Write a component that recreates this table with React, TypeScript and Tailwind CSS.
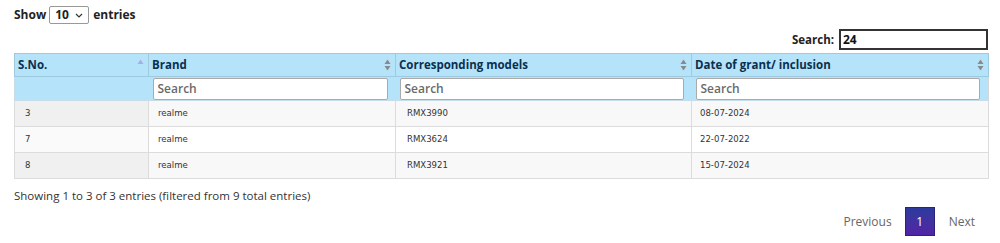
import React from "react";

const SortBoth = () => (
  <svg width="7" height="12" viewBox="0 0 7 12" className="shrink-0">
    <path d="M3.5 0.5 L6.5 5 L0.5 5 Z" fill="#8a8a8a" />
    <path d="M3.5 11.5 L6.5 7 L0.5 7 Z" fill="#8a8a8a" />
  </svg>
);

const SortAsc = () => (
  <svg width="7" height="12" viewBox="0 0 7 12" className="shrink-0">
    <path d="M3.5 0.5 L6.5 5 L0.5 5 Z" fill="#a7aee6" />
  </svg>
);

const rows = [
  { s: "3", b: "realme", m: "RMX3990", d: "08-07-2024" },
  { s: "7", b: "realme", m: "RMX3624", d: "22-07-2022" },
  { s: "8", b: "realme", m: "RMX3921", d: "15-07-2024" },
];

export default function App() {
  const sans = { fontFamily: '"Open Sans", "Noto Sans", sans-serif' };
  return (
    <div className="w-[1000px] h-[243px] bg-white text-[#222] overflow-hidden" style={sans}>
      <div className="pl-[14px] pr-[12px]">
        <div className="flex items-center h-[29px] pt-[1px] text-[12px] font-bold text-[#222]">
          <span>Show</span>
          <div className="ml-[3px] mr-[4px] w-[40px] h-[18px] border border-[#999] rounded-[2px] flex items-center justify-between pl-[5px] pr-[5px] font-bold">
            <span>10</span>
            <svg width="8" height="5" viewBox="0 0 8 5"><path d="M1 1 L4 4 L7 1" stroke="#333" strokeWidth="1.2" fill="none" /></svg>
          </div>
          <span>entries</span>
        </div>
        <div className="flex justify-end items-center h-[21px] text-[11.5px] font-bold">
          <span className="mr-[5px]">Search:</span>
          <div className="w-[149px] h-[21px] border-2 border-[#333] flex items-center pl-[2px] text-[12px] font-bold text-[#111]">24</div>
        </div>
        <table className="table-fixed border-collapse w-[974px] mt-[3px] border border-[#d6d6d6]">
          <colgroup>
            <col className="w-[134px]" />
            <col className="w-[247px]" />
            <col className="w-[296px]" />
            <col className="w-[297px]" />
          </colgroup>
          <thead>
            <tr className="bg-[#b5e4fa] h-[23px] text-[11.5px] font-bold text-[#0c2f4d]">
              {[
                ["S.No.", true],
                ["Brand", false],
                ["Corresponding models", false],
                ["Date of grant/ inclusion", false],
              ].map(([t, asc], i) => (
                <th key={i} className="border border-[#9fc9de] px-[3px] py-0 text-left font-bold">
                  <div className="flex items-center justify-between pr-[1px]">
                    <span>{t as string}</span>
                    {asc ? <SortAsc /> : <SortBoth />}
                  </div>
                </th>
              ))}
            </tr>
            <tr className="bg-[#b5e4fa] h-[24px]">
              <th className="border-l border-b border-[#c6dde9]"></th>
              {[0, 1, 2].map((i) => (
                <th key={i} className="border-b border-[#c6dde9] pl-[4px] pr-[8px] py-0">
                  <div className="h-[22px] bg-white border border-[#aaa] rounded-[2px] flex items-center pl-[4px] text-[12px] font-semibold text-[#6a6a6a] text-left">
                    Search
                  </div>
                </th>
              ))}
            </tr>
          </thead>
          <tbody style={{ fontFamily: '"DejaVu Sans Condensed", "DejaVu Sans", Verdana, sans-serif' }} className="text-[9.5px] text-[#333]">
            {rows.map((r, i) => {
              const odd = i % 2 === 0;
              return (
                <tr key={i} className={`h-[26px] ${odd ? "bg-[#f8f8f8]" : "bg-white"}`}>
                  <td className={`border border-[#dcdcdc] pl-[10px] ${odd ? "bg-[#f0f0f0]" : "bg-[#fafafa]"}`}>{r.s}</td>
                  <td className="border border-[#dcdcdc] pl-[9px]">{r.b}</td>
                  <td className="border border-[#dcdcdc] pl-[11px]">{r.m}</td>
                  <td className="border border-[#dcdcdc] pl-[8px]">{r.d}</td>
                </tr>
              );
            })}
          </tbody>
        </table>
        <div className="mt-[8px] text-[11.5px] text-[#333]">Showing 1 to 3 of 3 entries (filtered from 9 total entries)</div>
        <div className="flex justify-end items-center mt-[3px] text-[12px] text-[#666] pr-[13px]">
          <span className="mr-[13px]">Previous</span>
          <div className="w-[30px] h-[29px] flex items-center justify-center text-white border border-[#2a237a] bg-gradient-to-b from-[#2c3a9c] to-[#5123a6]">1</div>
          <span className="ml-[14px]">Next</span>
        </div>
      </div>
    </div>
  );
}
